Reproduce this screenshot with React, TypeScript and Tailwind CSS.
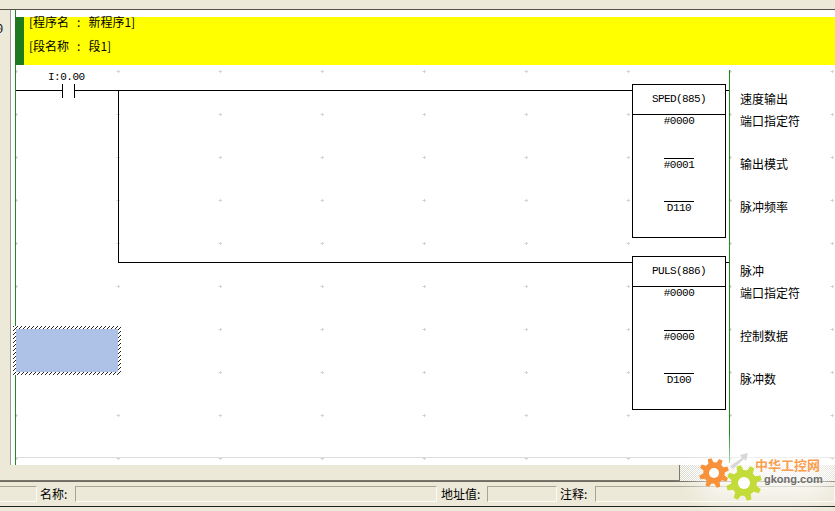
const cjk = "font-['SimSun','Noto_Sans_CJK_SC','Liberation_Sans',sans-serif]";
const mono = "font-['Liberation_Mono','DejaVu_Sans_Mono',monospace]";

const dotsX = [16, 118, 220, 322, 424, 526, 628, 730, 832];
const dotsY = [71, 114, 157, 200, 243, 286, 329, 372, 415, 458];

type Operand = { value: string; label: string };

type BlockProps = {
    title: string;
    label: string;
    operands: Operand[];
    className: string;
};

const gearPath = (cx: number, cy: number, r: number, teeth: number) => {
    const pts: string[] = [];
    const step = (Math.PI * 2) / teeth;
    for (let i = 0; i < teeth; i++) {
        const a = i * step - 0.3;
        const outer = [a - step * 0.16, a + step * 0.16];
        const inner = [a + step * 0.32, a + step * 0.68];
        outer.forEach((t) => pts.push(`${cx + r * Math.cos(t)},${cy + r * Math.sin(t)}`));
        inner.forEach((t) => pts.push(`${cx + r * 0.72 * Math.cos(t)},${cy + r * 0.72 * Math.sin(t)}`));
    }
    return pts.join(' ');
};

const FunctionBlock = ({ title, label, operands, className }: BlockProps) => (
    <div className={`absolute flex ${className}`}>
        <div className="w-[94px] h-[154px] border border-black bg-white shrink-0 flex flex-col items-center">
            <div className={`w-full h-[30px] shrink-0 border-b border-black flex items-center justify-center text-[11px] tracking-[-0.6px] text-black ${mono}`}>
                {title}
            </div>
            {operands.map((op, i) => (
                <div key={i} className="h-[43px] shrink-0">
                    <div className={`w-[30px] flex justify-center text-[11px] leading-[13px] text-black tracking-[-0.5px] ${mono} ${i === 0 ? '' : 'border-t border-black'}`}>
                        {op.value}
                    </div>
                </div>
            ))}
        </div>
        <div className={`ml-[14px] flex flex-col text-[12px] text-black whitespace-nowrap ${cjk}`}>
            <div className="h-[30px] pt-[8px] leading-[14px] shrink-0">{label}</div>
            {operands.map((op, i) => (
                <div key={i} className="h-[43px] leading-[14px] shrink-0">{op.label}</div>
            ))}
        </div>
    </div>
);

const BannerLine = ({ name, value }: { name: string; value: string }) => (
    <div className="flex whitespace-nowrap">
        <span>[{name}</span>
        <span className="mx-[8px]">:</span>
        <span>{value}]</span>
    </div>
);

const Field = ({ className }: { className: string }) => (
    <div className={`h-[16px] border-t border-l border-[#a8a593] border-b-[#fbfaf4] border-r-[#fbfaf4] border-r border-b ${className}`} />
);

const Logo = () => (
    <div className="absolute left-[660px] top-[436px] w-[175px] h-[75px] overflow-hidden">
        <div className="absolute left-[35px] top-[12px] w-[140px] h-[50px] bg-white/70 blur-md rounded-full" />
        <svg className="absolute inset-0" width="175" height="75" viewBox="0 0 175 75">
            <path d="M70 30 L82 22 L80 19 L88 17 L86 25 L84 23 L73 33 Z" fill="#d8d8d8" />
            <polygon points={gearPath(54, 37, 15, 8)} fill="#f7923a" />
            <circle cx="54" cy="37" r="5" fill="#fff" />
            <polygon points={gearPath(84, 47, 18, 8)} fill="#c3dc3a" />
            <circle cx="84" cy="47" r="6" fill="#fff" />
        </svg>
        <div className={`absolute left-[95px] top-[22px] text-[13px] leading-[14px] font-bold text-[#f9a050] whitespace-nowrap ${cjk}`}>中华工控网</div>
        <div className="absolute left-[104px] top-[37px] text-[11px] leading-[13px] font-bold text-[#6f6f6f] whitespace-nowrap font-['Liberation_Sans',sans-serif]">gkong.com</div>
    </div>
);

export default function App() {
    return (
        <div className="relative w-[835px] h-[511px] overflow-hidden bg-[#ece9d8] flex flex-col">
            <div className="h-[9px] shrink-0 bg-[#ece9d8]" />
            <div className="h-px shrink-0 bg-[#55534a]" />

            <div className="h-[455px] shrink-0 flex">
                <div className={`relative w-[10px] shrink-0 bg-[#ece9d8] text-[12px] text-black ${mono}`}>
                    <span className="absolute -left-[4px] top-[11px]">0</span>
                </div>
                <div className="w-px shrink-0 bg-[#9c9a8c]" />

                <div className="relative flex-1 bg-white">
                    <svg className="absolute inset-0" width="824" height="455" viewBox="11 10 824 455">
                        {dotsY.map((y) =>
                            dotsX.map((x) => (
                                <g key={`${x}-${y}`} stroke="#d4d4d4">
                                    <line x1={x - 1.5} y1={y + 0.5} x2={x + 2} y2={y + 0.5} />
                                    <line x1={x + 0.5} y1={y - 1} x2={x + 0.5} y2={y + 2} />
                                </g>
                            ))
                        )}
                        <line x1="16" y1="457.5" x2="835" y2="457.5" stroke="#dcdcdc" />
                        <g stroke="#000" strokeWidth="1">
                            <line x1="16" y1="90.5" x2="62" y2="90.5" />
                            <line x1="62.5" y1="84" x2="62.5" y2="98" />
                            <line x1="74.5" y1="84" x2="74.5" y2="98" />
                            <line x1="74" y1="90.5" x2="633" y2="90.5" />
                            <line x1="118.5" y1="90" x2="118.5" y2="263" />
                            <line x1="118" y1="262.5" x2="633" y2="262.5" />
                            <line x1="725" y1="90.5" x2="730" y2="90.5" />
                            <line x1="725" y1="262.5" x2="730" y2="262.5" />
                        </g>
                    </svg>

                    {/* power rails */}
                    <div className="absolute left-[4px] top-0 bottom-0 w-px bg-[#1f8a1f]" />
                    <div className="absolute left-[718px] top-[60px] bottom-[2px] w-px bg-[#1f8a1f]" />

                    {/* program header */}
                    <div className={`absolute left-[4px] top-[7px] right-0 h-[48px] bg-[#ffff00] border-l-[9px] border-[#1f7a1f] text-[12px] text-black ${cjk}`}>
                        <div className="flex flex-col pl-[5px] -mt-[2px] gap-[10px] leading-[14px]">
                            <BannerLine name="程序名" value="新程序1" />
                            <BannerLine name="段名称" value="段1" />
                        </div>
                    </div>

                    <div className={`absolute left-[37px] top-[60px] text-[11px] leading-[14px] tracking-[-0.5px] text-black ${mono}`}>I:0.00</div>

                    <FunctionBlock
                        className="left-[621px] top-[74px]"
                        title="SPED(885)"
                        label="速度输出"
                        operands={[
                            { value: '#0000', label: '端口指定符' },
                            { value: '#0001', label: '输出模式' },
                            { value: 'D110', label: '脉冲频率' },
                        ]}
                    />
                    <FunctionBlock
                        className="left-[621px] top-[246px]"
                        title="PULS(886)"
                        label="脉冲"
                        operands={[
                            { value: '#0000', label: '端口指定符' },
                            { value: '#0000', label: '控制数据' },
                            { value: 'D100', label: '脉冲数' },
                        ]}
                    />

                    {/* selected cell */}
                    <div className="absolute left-[2px] top-[316px] w-[108px] h-[49px] p-[3px] bg-[repeating-linear-gradient(135deg,#222_0_1.3px,#fff_1.3px_2.83px)]">
                        <div className="w-full h-full bg-[#aec2e8]" />
                    </div>
                </div>
            </div>

            {/* horizontal scrollbar */}
            <div className="h-[16px] shrink-0 flex bg-[#ece9d8]">
                <div className="w-[680px] border-r border-b border-[#77756a] bg-[#ece9d8]" />
                <div className="flex-1 bg-[repeating-conic-gradient(#fff_0_25%,#d9d6c8_0_50%)] bg-[length:2px_2px]" />
            </div>
            <div className="h-px shrink-0 bg-[#6e6c60]" />

            {/* status bar */}
            <div className={`h-[24px] shrink-0 flex items-center bg-[#ece9d8] text-[12px] text-black ${cjk}`}>
                <Field className="w-[37px] border-l-0" />
                <div className="w-[38px] pl-[3px] whitespace-nowrap">名称:</div>
                <Field className="w-[362px]" />
                <div className="w-[50px] pl-[4px] whitespace-nowrap">地址值:</div>
                <Field className="w-[70px]" />
                <div className="w-[38px] pl-[3px] whitespace-nowrap">注释:</div>
                <Field className="flex-1" />
            </div>
            <div className="h-px shrink-0 bg-[#222]" />
            <div className="flex-1 bg-[#ece9d8]" />

            <Logo />
        </div>
    );
}
